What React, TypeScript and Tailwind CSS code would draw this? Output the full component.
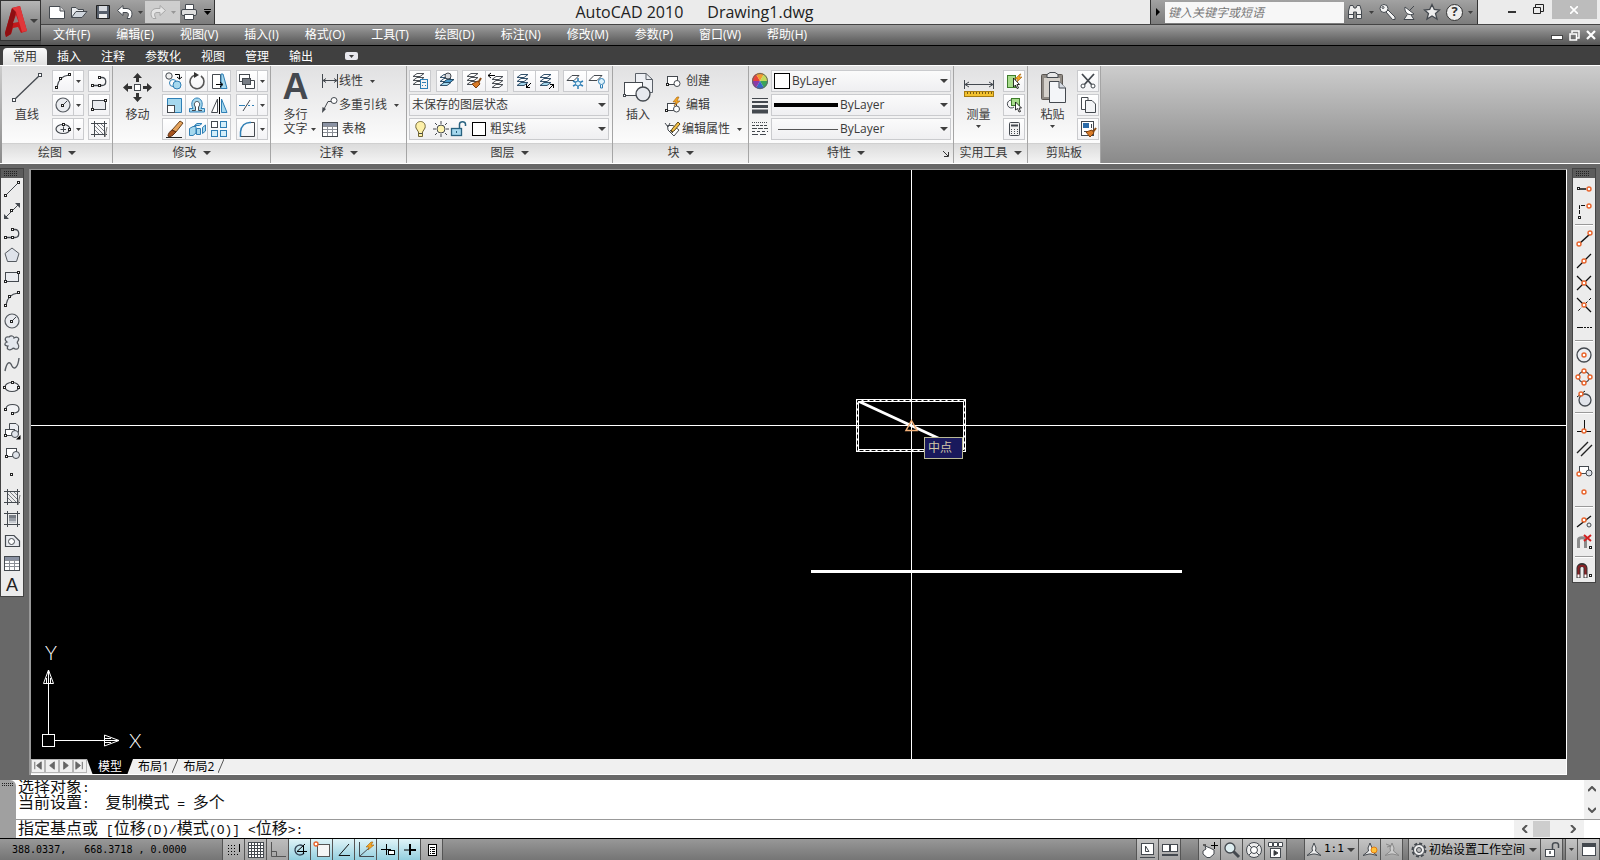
import React, { ReactNode } from "react";
import clsx from "clsx";

const ink = "#44494f";
const blue = "#2f7fb5";
const sky = "#a5d8ee";
const orange = "#e8642c";

const Svg = ({ w = 18, h = 18, children }: { w?: number; h?: number; children: ReactNode }) => (
  <svg width={w} height={h} viewBox={`0 0 ${w} ${h}`} fill="none" stroke={ink} className="shrink-0">
    {children}
  </svg>
);

// square grip used at the end of most line icons
const Node = ({ x, y }: { x: number; y: number }) => (
  <rect x={x - 0.5} y={y - 0.5} width="2" height="2" fill="#fff" stroke="#222" />
);

const Ring = ({ x, y }: { x: number; y: number }) => (
  <circle cx={x} cy={y} r="2" stroke={orange} strokeWidth="1.4" fill="#fff" />
);

const Caret = ({ className }: { className?: string }) => (
  <svg width="8" height="4" viewBox="0 0 8 4" className={clsx("shrink-0", className)}>
    <path d="M0 0H8L4 4Z" fill="#3f3f3f" />
  </svg>
);

const SmallCaret = ({ className }: { className?: string }) => (
  <svg width="5" height="3" viewBox="0 0 5 3" className={clsx("shrink-0", className)}>
    <path d="M0 0H5L2.5 3Z" fill="#3f3f3f" />
  </svg>
);

const sheets = (
  <g fill="#fff" stroke="#4a4f55">
    <path d="M2 12.5L6 9.5H13L9 12.5Z" />
    <path d="M2 8.5L6 5.5H13L9 8.5Z" />
    <path d="M2 4.5L6 1.5H13L9 4.5Z" />
  </g>
);

const blueSheets = (
  <g stroke="#33516b">
    <path d="M2 13.5L6 10.5H13L9 13.5Z" fill={sky} />
    <path d="M2 9.5L6 6.5H13L9 9.5Z" fill="#fff" />
    <path d="M2 5.5L6 2.5H13L9 5.5Z" fill="#fff" />
  </g>
);

const icons = {
  line: (
    <Svg>
      <path d="M3 15L15 3" />
      <Node x={2} y={15} />
      <Node x={15} y={2} />
    </Svg>
  ),
  xline: (
    <Svg>
      <path d="M3 15L15 3" />
      <path d="M1 17V12L6 17ZM17 1V6L12 1Z" fill={ink} stroke="none" />
      <Node x={8} y={8} />
    </Svg>
  ),
  polyline: (
    <Svg>
      <path d="M3 13.5H12C17 13.5 17 5.5 12 5.5H10" strokeWidth="1.3" />
      <Node x={2} y={13} />
      <Node x={9} y={13} />
      <Node x={9} y={5} />
    </Svg>
  ),
  polygon: (
    <Svg>
      <path d="M9 2L16 7.5L13.5 15.5H4.5L2 7.5Z" fill="#dfe3ea" stroke="#555a60" />
    </Svg>
  ),
  rect: (
    <Svg>
      <rect x="2.5" y="4.5" width="13" height="9" fill="#e9ebef" />
      <Node x={2} y={13} />
      <Node x={15} y={4} />
    </Svg>
  ),
  arc: (
    <Svg>
      <path d="M3 15C4 8 8 4 15 3" strokeWidth="1.2" />
      <Node x={2} y={15} />
      <Node x={6} y={6} />
      <Node x={15} y={2} />
    </Svg>
  ),
  circle: (
    <Svg>
      <circle cx="9" cy="9" r="7" fill="#e9ebef" stroke="#555a60" strokeWidth="1.2" />
      <path d="M9 9L13 5" />
      <Node x={8} y={9} />
    </Svg>
  ),
  cloud: (
    <Svg>
      <path
        d="M6 3C8 1 11 2 11 4C14 2 17 4 15 7C14 8 14 9 15 10C17 13 15 16 12 15C11 14 10 14 9 15C6 17 3 15 5 12C1 12 1 9 4 8C1 6 2 2 6 3Z"
        fill="#e4e8ee"
        stroke="#555a60"
        strokeWidth="1.2"
      />
    </Svg>
  ),
  spline: (
    <Svg>
      <path d="M2 15C4 5 7 5 9 10C11 14 15 12 16 2" stroke="#555a60" strokeWidth="1.4" />
    </Svg>
  ),
  ellipse: (
    <Svg>
      <ellipse cx="9" cy="9" rx="7" ry="4.5" fill="#f2f3f5" strokeWidth="1.2" />
      <Node x={9} y={4} />
      <Node x={1} y={9} />
      <Node x={15} y={9} />
    </Svg>
  ),
  ellipseCenter: (
    <Svg>
      <ellipse cx="9" cy="9" rx="7" ry="4.5" fill="#f2f3f5" strokeWidth="1.2" />
      <path d="M9.5 6.5V12M6.5 9.5H12" />
      <Node x={9} y={4} />
      <Node x={15} y={9} />
    </Svg>
  ),
  ellipseArc: (
    <Svg>
      <path d="M3 9C3 3 16 3 16 9C16 12 13 13 10 13" fill="#f2f3f5" strokeWidth="1.2" />
      <Node x={2} y={9} />
      <Node x={9} y={13} />
    </Svg>
  ),
  insertBlock: (
    <Svg>
      <path d="M6.5 1.5H13L15.5 4V10.5H6.5Z" fill="#eceef2" />
      <rect x="2.5" y="7.5" width="9" height="6" fill="#fff" />
      <circle cx="12" cy="12" r="3.5" fill="#e1e5eb" />
      <Node x={2} y={13} />
      <path d="M17.5 13V17.5H13Z" fill="#000" stroke="none" />
    </Svg>
  ),
  makeBlock: (
    <Svg>
      <rect x="3.5" y="4.5" width="10" height="8" fill="#fff" />
      <circle cx="13" cy="11" r="3.5" fill="#e1e5eb" />
      <Node x={3} y={12} />
    </Svg>
  ),
  point: (
    <Svg>
      <Node x={8} y={8} />
    </Svg>
  ),
  hatch: (
    <Svg>
      <path d="M4.5 1V17M14.5 1V17M1 3.5H17M1 14.5H17" />
      <path d="M5 6L13 14M7 4L14 11M11 4L14 7M5 10L9 14" stroke="#7c8086" />
      <path d="M15 17L17 7" stroke="#777" />
    </Svg>
  ),
  gradient: (
    <Svg>
      <path d="M4.5 1V17M14.5 1V17M1 3.5H17M1 14.5H17" />
      <rect x="6" y="5" width="7" height="3" fill="#777c84" stroke="none" />
      <rect x="6" y="8" width="7" height="3" fill="#989da5" stroke="none" />
      <rect x="6" y="11" width="7" height="2" fill="#c5c9cf" stroke="none" />
    </Svg>
  ),
  region: (
    <Svg>
      <path d="M2.5 3.5H11L16.5 9V14.5H2.5Z" fill="#e8eaef" strokeWidth="1.2" />
      <circle cx="8.5" cy="9.5" r="3" fill="#fff" />
    </Svg>
  ),
  table: (
    <Svg>
      <rect x="1.5" y="2.5" width="15" height="14" fill="#fff" />
      <rect x="2" y="3" width="14" height="3" fill="#8a92a3" stroke="none" />
      <path d="M2 6.5H16M2 9.5H16M2 12.5H16M6.5 6V16M11.5 6V16" stroke="#8b8f96" />
    </Svg>
  ),
  copy: (
    <Svg w={20} h={20}>
      <circle cx="5" cy="5" r="3.2" fill="#eee" />
      <circle cx="9" cy="12" r="3.5" stroke={blue} fill="#fff" />
      <circle cx="13" cy="14" r="4" stroke={blue} fill={sky} />
      <path d="M11 3.5H15.5V8M13 6L15.5 8L18 6" stroke="#000" />
    </Svg>
  ),
  rotate: (
    <Svg w={20} h={20}>
      <path d="M8 4A7 7 0 1 0 14 5" strokeWidth="1.6" stroke="#555" />
      <path d="M7 1L12 4L7 7Z" fill="#333" stroke="none" />
    </Svg>
  ),
  stretch: (
    <Svg w={20} h={20}>
      <path d="M3.5 3.5H11.5V17.5H3.5Z" fill="#fff" />
      <path d="M12 3H14L18 17.5H12Z" fill={sky} stroke={blue} />
      <path d="M7 13.5H13M11 11L14 13.5L11 16" stroke="#000" />
    </Svg>
  ),
  scale: (
    <Svg w={20} h={20}>
      <path d="M3.5 3.5H17.5V17.5H3.5Z" fill={sky} stroke={blue} />
      <rect x="3.5" y="10.5" width="7" height="7" fill="#fff" />
    </Svg>
  ),
  offset: (
    <Svg w={20} h={20}>
      <path d="M2.5 17V13.5H6C3 8 6 3 10 3C14 3 17 8 14 13.5H17.5V17Z" fill={sky} stroke={blue} />
      <path d="M5 15.5H8.5V12C6 9 8 6.5 10 6.5C12 6.5 14 9 11.5 12V15.5H15" fill="#fff" />
    </Svg>
  ),
  mirror: (
    <Svg w={20} h={20}>
      <path d="M8.5 4V17.5H2.5Z" fill="#fff" />
      <path d="M12.5 4V17.5H18Z" fill={sky} stroke={blue} />
      <path d="M10.5 2V19" stroke="#000" />
    </Svg>
  ),
  erase: (
    <Svg w={20} h={20}>
      <path d="M2 18.5H18" stroke="#222" />
      <path d="M16 2L19 4L12 13L8 11Z" fill="#e5a35c" stroke="#6b421c" />
      <path d="M8 11L12 13L9 16C7 18 4 18 4 17C4 15 6 12 8 11Z" fill="#a6541f" stroke="#5b2d12" />
    </Svg>
  ),
  explode: (
    <Svg w={20} h={20}>
      <g fill={sky} stroke={blue}>
        <path d="M2.5 9.5L6 7.5H9V14L6 16.5H2.5Z" />
        <path d="M7.5 6.5L10 4.5H15L12.5 6.5Z" />
        <path d="M9.5 9.5H13.5V15.5H9.5Z" />
        <path d="M15.5 8.5L18.5 6V12L15.5 14.5Z" />
      </g>
    </Svg>
  ),
  array: (
    <Svg w={20} h={20}>
      <rect x="2.5" y="2.5" width="6" height="6" fill="#fff" />
      <g fill="#d5effa" stroke={blue}>
        <rect x="11.5" y="2.5" width="6" height="6" />
        <rect x="2.5" y="11.5" width="6" height="6" />
        <rect x="11.5" y="11.5" width="6" height="6" />
      </g>
    </Svg>
  ),
  order: (
    <Svg w={20} h={20}>
      <rect x="2.5" y="3.5" width="10" height="7" fill="#fff" />
      <path d="M14 9.5H17.5V17.5H8.5V14" fill="#fff" />
      <rect x="5.5" y="7.5" width="8" height="6" fill="#777c84" />
    </Svg>
  ),
  trim: (
    <Svg w={20} h={20}>
      <path d="M2 10.5H8M11 10.5H13M15 10.5H17" stroke={blue} />
      <path d="M6 16L13 5" />
    </Svg>
  ),
  fillet: (
    <Svg w={20} h={20}>
      <path d="M3.5 18V13C4 7 8 3 14 3.5" stroke={blue} strokeWidth="1.5" />
      <path d="M14 3.5H17.5V17.5H4" />
    </Svg>
  ),
  linear: (
    <Svg>
      <path d="M1.5 2V16M16.5 2V16M2 8.5H16M5 6.5L2 8.5L5 10.5M13 6.5L16 8.5L13 10.5" />
    </Svg>
  ),
  leader: (
    <Svg>
      <circle cx="13" cy="4.5" r="3" fill="#fff" />
      <path d="M10 5.5H7L3 13" />
      <path d="M1 17L1.5 11L5 13Z" fill={ink} stroke="none" />
    </Svg>
  ),
  insertRow: (
    <Svg>
      <rect x="3.5" y="4.5" width="10" height="8" fill="#fff" />
      <circle cx="13" cy="11.5" r="3" fill="#fff" />
      <Node x={3} y={12} />
    </Svg>
  ),
  editBlock: (
    <Svg>
      <rect x="3.5" y="7.5" width="9" height="7" fill="#fff" />
      <circle cx="12.5" cy="13" r="3" fill="#fff" />
      <Node x={2} y={14} />
      <path d="M13 1L9 6H12L10 10L16 5H13L15 1Z" fill="#f5a623" stroke="#a3620d" strokeWidth=".6" />
    </Svg>
  ),
  editAttr: (
    <Svg>
      <path d="M3.5 5.5H9L15 10L10 16L4 10Z" fill="#fff" />
      <path d="M1 3L4 7L6 3M6 10L9 13" />
      <path d="M14 2L16 4L10 11L7 12L8 9Z" fill="#f4c046" stroke="#5d4a1c" />
    </Svg>
  ),
  layerProps: (
    <Svg>
      {sheets}
      <rect x="9.5" y="7.5" width="7" height="9" fill="#f4f4f4" stroke={blue} />
      <path d="M11 10.5H15M11 13.5H12M14 13.5H15" stroke={blue} />
    </Svg>
  ),
  layerMatch: (
    <Svg>
      {blueSheets}
      <path d="M5 10.5L9 7.5H16L12 10.5Z" fill="#4c9ed0" stroke="#234a66" />
      <circle cx="10" cy="4" r="3" fill="#d5d9df" />
    </Svg>
  ),
  layerBrush: (
    <Svg>
      {sheets}
      <path d="M16 6L13 11" stroke="#8b4c15" strokeWidth="2" />
      <path d="M7 12L13 9L15 12L11 16Z" fill="#d97b28" stroke="#7c3f0e" />
    </Svg>
  ),
  layerPrev: (
    <Svg>
      <g transform="translate(3 3)">{sheets}</g>
      <path d="M8 3.5H1M4 1L1 3.5L4 6" stroke="#000" />
    </Svg>
  ),
  layerIso: (
    <Svg>
      {blueSheets}
      <path d="M16 11L11 16M11.5 12V15.5H15" stroke="#000" />
    </Svg>
  ),
  layerUniso: (
    <Svg>
      {blueSheets}
      <path d="M11 17L16 12M12 12.5H15.5V16" stroke="#000" />
    </Svg>
  ),
  layerFreeze: (
    <Svg>
      <path d="M1 8.5L6 3.5H13L8 8.5Z" fill="#fff" />
      <path d="M12 6V17M7 9L17 14M17 9L7 14" stroke={blue} strokeWidth="1.5" />
      <circle cx="12" cy="11.5" r="2.5" fill="#dff2fb" stroke={blue} />
    </Svg>
  ),
  layerOff: (
    <Svg>
      <path d="M1 8.5L6 3.5H14L9 8.5Z" fill="#fff" />
      <circle cx="13.5" cy="9.5" r="3" fill="#dff2fb" stroke={blue} />
      <path d="M12.5 13V16H14.5V13" stroke={blue} />
    </Svg>
  ),
  quickSelect: (
    <Svg>
      <rect x="2.5" y="3.5" width="8" height="12" fill="#a8dc8c" stroke="#3f7d2c" />
      <path d="M15 2L10 7H13L11 11L17 5H14L16 2Z" fill="#f5a623" stroke="#a3620d" strokeWidth=".6" />
      <path d="M8.5 6V15L10.5 13L12 16.5L13.5 16L12 12.5H14.5Z" fill="#fff" stroke="#000" strokeWidth=".8" />
    </Svg>
  ),
  selectAll: (
    <Svg>
      <path d="M6 4A4 4 0 1 0 9 11" />
      <rect x="6.5" y="2.5" width="8" height="7" fill="#a8dc8c" stroke="#3f7d2c" />
      <path d="M10.5 6V14L12.5 12.5L14 16L15.5 15.5L14 12H16.5Z" fill="#fff" stroke="#000" strokeWidth=".8" />
    </Svg>
  ),
  calc: (
    <Svg>
      <rect x="4.5" y="2.5" width="10" height="13" rx="1" fill="#f1f1f1" />
      <path d="M6 5.5H13" strokeWidth="2" />
      <path d="M6 9.5H13M6 11.5H13M6 13.5H13" strokeDasharray="1 2" />
    </Svg>
  ),
  cut: (
    <Svg>
      <path d="M3 2L13 13M15 2L5 13" strokeWidth="1.8" />
      <circle cx="4" cy="14" r="2" fill="#fff" />
      <circle cx="14" cy="14" r="2" fill="#fff" />
    </Svg>
  ),
  copyClip: (
    <Svg>
      <path d="M2.5 1.5H9V13.5H2.5Z" fill="#fff" />
      <path d="M6.5 4.5H13L16.5 8V16.5H6.5Z" fill="#f4f5f7" />
    </Svg>
  ),
  matchProps: (
    <Svg>
      <rect x="2.5" y="1.5" width="12" height="14" fill="#fff" />
      <rect x="4" y="3" width="6" height="5" fill="#2a6aa8" stroke="none" />
      <path d="M12.5 4V8M5 11.5H8" />
      <path d="M17 8L14 12" stroke="#8b4c15" strokeWidth="2" />
      <path d="M7 12L13 10L15 13L11 17Z" fill="#d97b28" stroke="#7c3f0e" />
    </Svg>
  ),
};

const osnap: Record<string, ReactNode> = {
  临时追踪点: (<Svg><path d="M5 9H11" strokeWidth="1.5" stroke="#111" /><Node x={3} y={8} /><Ring x={14} y={9} /></Svg>),
  捕捉自: (<Svg><path d="M4.500 12V3.500H11" strokeDasharray="4 1" stroke="#111" /><Node x={4} y={15} /><Ring x={14} y={4} /></Svg>),
  端点: (<Svg><path d="M4 14L15 4" strokeWidth="1.5" stroke="#111" /><Ring x={4} y={14} /><Ring x={15} y={3} /></Svg>),
  中点: (<Svg><path d="M2 16L16 2" strokeWidth="1.3" stroke="#111" /><Ring x={9} y={9} /></Svg>),
  交点: (<Svg><path d="M2 2L16 16M16 2L2 16" strokeWidth="1.3" stroke="#111" /><Ring x={9} y={9} /></Svg>),
  外观交点: (<Svg><path d="M2 2L16 16" strokeWidth="1.3" stroke="#111" /><path d="M16 2L2 16" strokeDasharray="3 2" stroke="#111" /><Ring x={9} y={9} /></Svg>),
  延长线: (<Svg><path d="M2 9.500H8M9 9.500H11M12 9.500H14M15 9.500H17" stroke="#111" /></Svg>),
  圆心: (<Svg><circle cx="9" cy="9" r="7" fill="#eceef2" strokeWidth="1.3" /><Ring x={9} y={9} /></Svg>),
  象限点: (<Svg><circle cx="9" cy="9" r="5.5" strokeWidth="1.3" /><Ring x={9} y={3} /><Ring x={9} y={15} /><Ring x={3} y={9} /><Ring x={15} y={9} /></Svg>),
  切点: (<Svg><circle cx="10" cy="10" r="6" fill="#e1e4ea" strokeWidth="1.3" /><path d="M2 7L10 1" stroke="#111" /><Ring x={6} y={4} /></Svg>),
  垂足: (<Svg><path d="M2 13.500H16M9.500 2V12" stroke="#111" /><Ring x={9} y={13} /></Svg>),
  平行线: (<Svg><path d="M2 13L13 2M6 16L17 5" strokeWidth="1.4" stroke="#222" /></Svg>),
  插入点: (<Svg><rect x="4.500" y="4.500" width="9" height="7" fill="#fff" /><circle cx="14" cy="11" r="3" fill="#dfe3ea" /><Ring x={4} y={12} /></Svg>),
  节点: (<Svg><Ring x={9} y={8} /></Svg>),
  最近点: (<Svg><path d="M2 15L16 4" strokeWidth="1.3" stroke="#111" /><Ring x={9} y={8} /><circle cx="14" cy="13" r="2" /></Svg>),
  无捕捉: (<Svg><path d="M3.500 16V6C3.500 3 10.500 3 10.500 6V16" stroke="#8c8c8c" strokeWidth="3" /><path d="M2 15H5M9 15H12" stroke="#eee" strokeWidth="2" /><path d="M9 1L16 7M16 1L9 7" stroke="#d21f1f" strokeWidth="2" /><Node x={15} y={13} /></Svg>),
  对象捕捉设置: (<Svg><path d="M3.500 16V6C3.500 2 10.500 2 10.500 6V16" stroke="#333" strokeWidth="4" /><path d="M3.500 15V6C3.500 3 10.500 3 10.500 6V15" stroke="#8a2226" strokeWidth="2" /><path d="M2.500 14H4.500M9.500 14H11.500" stroke="#fff" strokeWidth="3" /><Node x={15} y={13} /></Svg>),
};

const osnapGroups = [
  ["临时追踪点", "捕捉自"],
  ["端点", "中点", "交点", "外观交点", "延长线"],
  ["圆心", "象限点", "切点"],
  ["垂足", "平行线", "插入点", "节点"],
  ["最近点", "无捕捉"],
  ["对象捕捉设置"],
];

const drawTools: [string, ReactNode][] = [
  ["直线", icons.line],
  ["构造线", icons.xline],
  ["多段线", icons.polyline],
  ["正多边形", icons.polygon],
  ["矩形", icons.rect],
  ["圆弧", icons.arc],
  ["圆", icons.circle],
  ["修订云线", icons.cloud],
  ["样条曲线", icons.spline],
  ["椭圆", icons.ellipse],
  ["椭圆弧", icons.ellipseArc],
  ["插入块", icons.insertBlock],
  ["创建块", icons.makeBlock],
  ["点", icons.point],
  ["图案填充", icons.hatch],
  ["渐变色", icons.gradient],
  ["面域", icons.region],
  ["表格", icons.table],
];

const menus = [
  "文件(F)", "编辑(E)", "视图(V)", "插入(I)", "格式(O)", "工具(T)",
  "绘图(D)", "标注(N)", "修改(M)", "参数(P)", "窗口(W)", "帮助(H)",
];

const tabs = ["常用", "插入", "注释", "参数化", "视图", "管理", "输出"];

const QuickAccess = () => (
  <div className="flex h-6 w-[174px] items-center border-r border-[#333] bg-linear-to-b from-[#a2a2a2] to-[#7c7c7c] pl-[7px]">
    <button aria-label="新建" className="w-[22px]">
      <Svg><path d="M1.500 3.500H12L16.500 8V15.500H1.500Z" fill="#fff" /><path d="M12 3.500V8H16.500" fill="#ddd" /></Svg>
    </button>
    <button aria-label="打开" className="w-6">
      <Svg><path d="M1.500 14.500V4.500H6L8 6.500H13.500V9" fill="#e8ebee" /><path d="M1.500 14.500L6 8.500H17L12 14.500Z" fill="#cfd5dc" /></Svg>
    </button>
    <button aria-label="保存" className="w-[22px]">
      <Svg><path d="M2.500 2.500H15.500V15.500H2.500Z" fill="#58606c" stroke="#222" /><rect x="5" y="3" width="8" height="5" fill="#d8dbe0" stroke="none" /><rect x="5" y="11" width="8" height="4" fill="#eee" stroke="none" /></Svg>
    </button>
    <button aria-label="放弃" className="flex w-[29px] items-center gap-1">
      <Svg><path d="M1.500 7.500L7 2.500V5.500H11C17 6 17 13 14 15.500H11C13 12 13 9.500 10 9.500H7V12.500Z" fill="#fff" /></Svg>
      <SmallCaret />
    </button>
    <button aria-label="重做" className="flex h-[22px] w-[35px] items-center gap-1 bg-[#d4d4d4] pl-1 opacity-90">
      <Svg><path d="M16.500 7.500L11 2.500V5.500H7C1 6 1 13 4 15.500H7C5 12 5 9.500 8 9.500H11V12.500Z" fill="#eee" stroke="#aaa" /></Svg>
      <SmallCaret className="opacity-40" />
    </button>
    <button aria-label="打印" className="w-[22px]">
      <Svg><path d="M5.500 7V1.500H13.500V7" fill="#fff" /><rect x="1.500" y="6.500" width="15" height="6" rx="1.500" fill="#ddd" /><path d="M4.500 11.500H13.500V16.500H4.500Z" fill="#fff" /></Svg>
    </button>
    <button aria-label="自定义快速访问工具栏" className="flex flex-col items-center gap-px pl-[2px]">
      <span className="h-px w-[7px] bg-black" />
      <svg width="7" height="4"><path d="M0 0H7L3.500 4Z" fill="#000" /></svg>
    </button>
  </div>
);

const TitleBar = () => (
  <div className="box-content flex h-6 items-start justify-between border-b border-[#444] bg-[#ebebeb]">
    <QuickAccess />
    <h1 className="ml-auto flex gap-6 pl-6 text-base leading-[25px] text-[#222]">
      <span>AutoCAD 2010</span>
      <span>Drawing1.dwg</span>
    </h1>
    <div className="ml-auto flex h-6 w-[328px] items-center border-x border-[#333] bg-linear-to-b from-[#a2a2a2] to-[#7c7c7c]">
      <svg width="14" height="8"><path d="M5 0L9 4L5 8Z" fill="#000" /></svg>
      <input
        aria-label="搜索"
        placeholder="键入关键字或短语"
        className="mt-px h-[21px] w-[179px] bg-[#f7f7f7] pl-[3px] text-[12px] italic placeholder:text-[#777]"
      />
      <button aria-label="搜索按钮" className="flex items-center gap-[5px] pl-[2px]">
        <Svg><path d="M2.500 15.500V8L4 2.500H7L8 5H10L11 2.500H14L15.500 8V15.500H10.500V9H7.500V15.500Z" fill="#eee" /><path d="M2 11.500H7M11 11.500H16" /></Svg>
        <SmallCaret />
      </button>
      <button aria-label="速博应用中心" className="pl-1">
        <Svg><circle cx="6" cy="5.500" r="4" fill="#f4f4f4" /><path d="M8 9L10 7L17 14V16.500H14.500Z" fill="#f4f4f4" /><circle cx="5" cy="4.500" r="1" /></Svg>
      </button>
      <button aria-label="通讯中心" className="pl-[5px]">
        <Svg><path d="M4 4C3 10 8 13 13 11Z" fill="#fff" /><path d="M8 8L13 3M6 12L3 16.500H13L10 12" fill="#eee" /></Svg>
      </button>
      <button aria-label="收藏夹" className="pl-1">
        <Svg><path d="M9 1.500L11.300 6.500L16.500 7L12.500 10.500L14 16L9 13L4 16L5.500 10.500L1.500 7L6.700 6.500Z" fill="#eee" strokeWidth="1.300" /></Svg>
      </button>
      <button aria-label="帮助" className="flex items-center gap-[5px] pl-[5px]">
        <span className="flex size-[17px] items-center justify-center rounded-full border border-[#333] bg-[#eee] text-[13px] font-bold text-[#333]">?</span>
        <SmallCaret />
      </button>
    </div>
    <div className="flex h-[19px] w-[122px] items-center justify-end">
      <button aria-label="最小化" className="flex h-full w-[26px] items-center justify-center">
        <span className="mt-[5px] h-[2px] w-2 bg-[#333]" />
      </button>
      <button aria-label="还原" className="flex h-full w-[27px] items-center justify-center">
        <svg width="11" height="11" fill="none" stroke="#222"><path d="M.5 3.500H7.500V9.500H.5ZM2.500 3V.5H10.500V7.500H8" /></svg>
      </button>
      <button aria-label="关闭" className="mr-[3px] flex h-full w-[45px] items-center justify-center bg-[#bcbcbc]">
        <svg width="8" height="8" stroke="#fff" strokeWidth="1.600"><path d="M0 0L8 8M8 0L0 8" /></svg>
      </button>
    </div>
  </div>
);

const MenuBar = () => (
  <nav className="flex h-5 items-center justify-between bg-linear-to-b from-[#9f9f9f] to-[#565656] pl-3 text-[12px] text-white">
    <div className="flex gap-[26px]">
      {menus.map((item) => (
        <button key={item} className="whitespace-nowrap">{item}</button>
      ))}
    </div>
    <div className="flex items-center gap-[6px] pr-1">
      <button aria-label="最小化图形" className="mt-1 h-[5px] w-3 border border-[#444] bg-white" />
      <button aria-label="还原图形">
        <svg width="11" height="11" fill="none" stroke="#fff" strokeWidth="1.500"><path d="M1 4H7.500V10H1ZM3 3V1H10V8H8" /></svg>
      </button>
      <button aria-label="关闭图形">
        <svg width="10" height="10" stroke="#fff" strokeWidth="2.200"><path d="M1 1L9 9M9 1L1 9" /></svg>
      </button>
    </div>
  </nav>
);

const TabRow = () => (
  <div className="box-content flex h-[19px] items-end border-t border-black bg-[#404040] pl-[3px] text-[12px]">
    {tabs.map((tab, index) => (
      <button
        key={tab}
        className={clsx("h-[17px] px-[10px] leading-[15px]", index === 0 ? "rounded-t-sm bg-linear-to-b from-[#fafafa] to-[#e2e2e2] text-[#333]" : "text-white")}
      >
        {tab}
      </button>
    ))}
    <button aria-label="最小化功能区" className="mb-[5px] ml-[22px] flex h-2 w-[13px] items-center justify-center rounded-xs bg-[#e8e8ee]">
      <SmallCaret />
    </button>
  </div>
);

const Group = ({ className, items }: { className: string; items: [string, ReactNode][] }) => (
  <div className={clsx("flex h-[22px] divide-x divide-[#cacbce] border border-[#cacbce] bg-linear-to-b from-white to-[#f3f3f5]", className)}>
    {items.map(([label, icon]) => (
      <button key={label} aria-label={label} className="flex min-w-0 flex-1 items-center justify-center">
        {icon}
      </button>
    ))}
  </div>
);

const Split = ({ label, icon }: { label: string; icon: ReactNode }) => (
  <div className="flex h-[22px] w-8 divide-x divide-[#cacbce] border border-[#cacbce] bg-linear-to-b from-white to-[#f3f3f5]">
    <button aria-label={label} className="flex w-[21px] items-center justify-center">{icon}</button>
    <button aria-label={`${label}选项`} className="flex flex-1 items-center justify-center"><SmallCaret /></button>
  </div>
);

const Large = ({ label, icon, className, children }: { label: string; icon: ReactNode; className: string; children?: ReactNode }) => (
  <button className={clsx("flex shrink-0 flex-col items-center pt-[2px]", className)}>
    {icon}
    <span className="mt-[3px] leading-4">{label}</span>
    {children}
  </button>
);

const Row = ({ label, icon, caret }: { label: string; icon: ReactNode; caret?: boolean }) => (
  <button className="flex h-[22px] items-center whitespace-nowrap text-left">
    {icon}
    <span>{label}</span>
    {caret && <SmallCaret className="ml-[7px]" />}
  </button>
);

const Panel = ({ title, width, caret = true, launcher, children }: { title: string; width: string; caret?: boolean; launcher?: boolean; children: ReactNode }) => (
  <section className={clsx("flex shrink-0 flex-col border-r border-[#a5a5a5]", width)}>
    <div className="flex h-[77px] bg-linear-to-b from-[#e1e1e2] to-[#fcfcfc] pt-1">{children}</div>
    <div className="flex h-5 items-start border-t border-[#d0d0d0] bg-linear-to-b from-[#dcdcdc] to-[#f4f4f4]">
      <button className="flex flex-1 items-center justify-center gap-[6px] leading-[17px]">
        {title}
        {caret && <Caret />}
      </button>
      {launcher && (
        <button aria-label="特性对话框" className="pr-1 pt-[7px]">
          <svg width="6" height="6" stroke="#333" fill="none"><path d="M0 0L5 5M5.500 1V5.500H1" /></svg>
        </button>
      )}
    </div>
  </section>
);

const Dropdown = ({ label, value, swatch }: { label: string; value: string; swatch?: ReactNode }) => (
  <label className="flex h-[22px] items-center border border-[#cacbce] bg-linear-to-b from-[#fbfbfb] to-[#efeff1] px-[2px]">
    {swatch}
    <select aria-label={label} className="min-w-0 flex-1 appearance-none bg-transparent outline-none">
      <option>{value}</option>
    </select>
    <Caret />
  </label>
);

const Ribbon = () => (
  <div className="flex h-[99px] border-y border-white bg-linear-to-b from-[#cdcdcd] to-[#8a8a8a] pl-[2px] text-[12px] text-[#3a3a3a]">
    <Panel title="绘图" width="w-[111px]">
      <Large
        label="直线"
        className="w-[50px]"
        icon={
          <Svg w={32} h={32}>
            <path d="M3 28L29 3" strokeWidth="1.300" />
            <rect x="1.500" y="26.500" width="3" height="3" fill="#fff" />
            <rect x="27.500" y="1.500" width="3" height="3" fill="#fff" />
          </Svg>
        }
      />
      <div className="flex flex-col gap-[2px]">
        <Split label="圆弧" icon={icons.arc} />
        <Split label="圆" icon={icons.circle} />
        <Split label="椭圆" icon={icons.ellipseCenter} />
      </div>
      <div className="ml-1 flex flex-col gap-[2px]">
        <Group className="w-[22px]" items={[["多段线", icons.polyline]]} />
        <Group className="w-[22px]" items={[["矩形", icons.rect]]} />
        <Group className="w-[22px]" items={[["图案填充", icons.hatch]]} />
      </div>
    </Panel>
    <Panel title="修改" width="w-[158px]">
      <Large
        label="移动"
        className="w-[49px]"
        icon={
          <Svg w={32} h={32}>
            <rect x="12.500" y="12.500" width="6" height="6" fill="#fff" />
            <g fill="#333" stroke="none">
              <path d="M15.500 1L20 6H17V10H14V6H11Z" />
              <path d="M15.500 30L11 25H14V21H17V25H20Z" />
              <path d="M1 15.500L6 11V14H10V17H6V20Z" />
              <path d="M30 15.500L25 20V17H21V14H25V11Z" />
            </g>
          </Svg>
        }
      />
      <div className="flex flex-col gap-[2px]">
        <Group className="w-[69px]" items={[["复制", icons.copy], ["旋转", icons.rotate], ["拉伸", icons.stretch]]} />
        <Group className="w-[69px]" items={[["缩放", icons.scale], ["偏移", icons.offset], ["镜像", icons.mirror]]} />
        <Group className="w-[69px]" items={[["删除", icons.erase], ["分解", icons.explode], ["阵列", icons.array]]} />
      </div>
      <div className="ml-[5px] flex flex-col gap-[2px]">
        <Split label="绘图次序" icon={icons.order} />
        <Split label="修剪" icon={icons.trim} />
        <Split label="圆角" icon={icons.fillet} />
      </div>
    </Panel>
    <Panel title="注释" width="w-[136px]">
      <button className="flex w-[49px] shrink-0 flex-col items-center leading-[14px]">
        <span className="mb-1 h-[34px] font-['Liberation_Sans',sans-serif] text-[36px] font-bold leading-[34px] text-[#45494f]">A</span>
        <span>多行</span>
        <span className="ml-2 flex items-center gap-[3px]">文字<SmallCaret /></span>
      </button>
      <div className="ml-px flex flex-col gap-[2px]">
        <Row label="线性" icon={icons.linear} caret />
        <Row label="多重引线" icon={icons.leader} caret />
        <Row label="表格" icon={<span className="mr-[3px]">{icons.table}</span>} />
      </div>
    </Panel>
    <Panel title="图层" width="w-[206px]">
      <div className="flex w-full flex-col gap-[2px] pl-[2px] pr-[3px]">
        <div className="flex justify-between">
          <Group className="w-[22px]" items={[["图层特性", icons.layerProps]]} />
          <Group className="w-[22px]" items={[["置为当前", icons.layerMatch]]} />
          <Group className="w-[46px]" items={[["匹配", icons.layerBrush], ["上一个", icons.layerPrev]]} />
          <Group className="w-[46px]" items={[["隔离", icons.layerIso], ["取消隔离", icons.layerUniso]]} />
          <Group className="w-[46px]" items={[["冻结", icons.layerFreeze], ["关闭图层", icons.layerOff]]} />
        </div>
        <Dropdown label="图层状态" value="未保存的图层状态" />
        <Dropdown
          label="图层"
          value="粗实线"
          swatch={
            <span className="mr-1 flex items-center">
              <Svg><path d="M6.500 16.500V12L4 8C3 4 5.500 1.500 8.500 1.500C11.500 1.500 14 4 13 8L10.500 12V16.500Z" fill="#fdf0a8" stroke="#6f6433" /><path d="M7 13.500H10" /></Svg>
              <Svg w={20}><circle cx="11" cy="9" r="4" fill="#fff4ae" /><path d="M11 1V4M11 14V17M3 9H6M16 9H19M5 3L7 5M17 3L15 5M5 15L7 13M17 15L15 13" /></Svg>
              <Svg><rect x="1.500" y="8.500" width="10" height="7" fill={sky} stroke="#27617f" strokeWidth="1.300" /><path d="M9.500 8V4C10 1 15 1 15.500 4V6" stroke="#27617f" strokeWidth="1.500" /><path d="M6.500 11V13" stroke="#27617f" /></Svg>
              <span className="ml-1 size-[14px] border border-black bg-white" />
            </span>
          }
        />
      </div>
    </Panel>
    <Panel title="块" width="w-[136px]">
      <Large
        label="插入"
        className="w-[50px]"
        icon={
          <Svg w={32} h={32}>
            <path d="M13.500 1.500H24L30.500 7.500V20.500H13.500Z" fill="#eef0f4" stroke="#5a6068" />
            <path d="M24 1.500V7.500H30.500" stroke="#5a6068" />
            <rect x="2.500" y="10.500" width="18" height="13" fill="#fff" />
            <circle cx="21" cy="22" r="7" fill="#e6e9ef" strokeWidth="1.300" />
            <rect x="1.500" y="22.500" width="2" height="2" fill="#fff" />
          </Svg>
        }
      />
      <div className="ml-px flex flex-col gap-[2px]">
        <Row label="创建" icon={<span className="mr-1">{icons.insertRow}</span>} />
        <Row label="编辑" icon={<span className="mr-1">{icons.editBlock}</span>} />
        <Row label="编辑属性" icon={icons.editAttr} caret />
      </div>
    </Panel>
    <Panel title="特性" width="w-[205px]" launcher>
      <div className="flex w-full flex-col gap-[2px] px-[2px]">
        <div className="flex items-center gap-[2px]">
          <svg width="18" height="18" viewBox="0 0 18 18">
            <path d="M9 9L1 9A8 8 0 0 1 5 2Z" fill="#e8443a" />
            <path d="M9 9L5 2A8 8 0 0 1 13 2Z" fill="#f29b2e" />
            <path d="M9 9L13 2A8 8 0 0 1 17 9Z" fill="#c5da5a" />
            <path d="M9 9L17 9A8 8 0 0 1 13 16Z" fill="#3aa35a" />
            <path d="M9 9L13 16A8 8 0 0 1 5 16Z" fill="#3468c9" />
            <path d="M9 9L5 16A8 8 0 0 1 1 9Z" fill="#8a3aa8" />
            <circle cx="9" cy="9" r="7.500" fill="none" stroke="#666" />
          </svg>
          <div className="flex-1">
            <Dropdown label="颜色" value="ByLayer" swatch={<span className="mr-[2px] size-4 border border-black bg-white" />} />
          </div>
        </div>
        <div className="flex items-center gap-[2px]">
          <Svg><path d="M1 2.500H17" /><path d="M1 6H17" strokeWidth="2" /><path d="M1 10.500H17" strokeWidth="3" /><path d="M1 15.500H17" strokeWidth="4" /></Svg>
          <div className="flex-1">
            <Dropdown label="线宽" value="ByLayer" swatch={<span className="mr-[2px] h-1 w-16 bg-black" />} />
          </div>
        </div>
        <div className="flex items-center gap-[2px]">
          <Svg><path d="M1 2.500H17" strokeDasharray="1 1" /><path d="M1 5.500H17" strokeDasharray="3 1" /><path d="M1 8.500H17" strokeDasharray="5 1" /><path d="M1 11.500H17" strokeDasharray="3 2" /><path d="M1 14.500H17" strokeDasharray="6 2" /></Svg>
          <div className="flex-1">
            <Dropdown label="线型" value="ByLayer" swatch={<span className="ml-1 mr-[2px] h-px w-[60px] bg-[#555]" />} />
          </div>
        </div>
      </div>
    </Panel>
    <Panel title="实用工具" width="w-[74px]">
      <Large
        label="测量"
        className="w-[49px]"
        icon={
          <Svg w={32} h={32}>
            <path d="M1.500 8V17M30.500 8V17M2 12.500H30M6 10L2 12.500L6 15M26 10L30 12.500L26 15" />
            <rect x="1.500" y="19.500" width="29" height="5" fill="#f2c12f" stroke="#a67c12" />
            <path d="M4.500 20V22M7.500 20V22M10.500 20V22M13.500 20V22M16.500 20V22M19.500 20V22M22.500 20V22M25.500 20V22M28.500 20V22" stroke="#7a5c10" />
          </Svg>
        }
      >
        <SmallCaret className="mt-[2px]" />
      </Large>
      <div className="flex flex-col gap-[2px]">
        <Group className="w-[22px]" items={[["快速选择", icons.quickSelect]]} />
        <Group className="w-[22px]" items={[["全部选择", icons.selectAll]]} />
        <Group className="w-[22px]" items={[["计算器", icons.calc]]} />
      </div>
    </Panel>
    <Panel title="剪贴板" width="w-[73px]" caret={false}>
      <Large
        label="粘贴"
        className="w-[49px]"
        icon={
          <Svg w={32} h={32}>
            <rect x="4.500" y="2.500" width="21" height="25" rx="1" fill="#8f8a84" stroke="#5c5752" />
            <rect x="7" y="6" width="16" height="19" fill="#d5d1cb" stroke="none" />
            <path d="M10 5.500V2.500L13 .5H18L21 2.500V5.500Z" fill="#e8e8e8" />
            <path d="M12.500 9.500H22L28.500 16V30.500H12.500Z" fill="#f3f5f8" />
            <path d="M22 9.500V16H28.500" fill="#d5dae2" />
          </Svg>
        }
      >
        <SmallCaret className="mt-[2px]" />
      </Large>
      <div className="flex flex-col gap-[2px]">
        <Group className="w-[22px]" items={[["剪切", icons.cut]]} />
        <Group className="w-[22px]" items={[["复制剪裁", icons.copyClip]]} />
        <Group className="w-[22px]" items={[["特性匹配", icons.matchProps]]} />
      </div>
    </Panel>
  </div>
);

const Grip = () => (
  <div className="flex h-[9px] items-center bg-[#5c5c5c] pl-[3px]">
    <svg width="14" height="5" stroke="#222" strokeDasharray="1 1"><path d="M0 .5H14M0 2.500H14M0 4.500H14" /></svg>
  </div>
);

const Canvas = () => (
  <div className="relative flex-1 overflow-hidden bg-black">
    <svg className="absolute inset-0 size-full" stroke="#fff" fill="none">
      <path d="M827 231L920 274" strokeWidth="3" />
      <rect x="826.500" y="230.500" width="107" height="50" strokeWidth="3" />
      <rect x="826.500" y="230.500" width="107" height="50" stroke="#000" strokeDasharray="4 2" />
      <path d="M780 401.500H1151" strokeWidth="3" />
      <line x1="880.500" y1="0" x2="880.500" y2="100%" />
      <line x1="0" y1="255.500" x2="100%" y2="255.500" />
      <path d="M880.500 250.500L886 260.500H875Z" stroke="#f5b27a" strokeWidth="1.500" />
    </svg>
    <div className="absolute left-[893px] top-[267px] h-[22px] w-[39px] border border-[#b9b996] bg-[#19195c] pl-[3px] text-[12px] leading-5 text-[#d2c8a8]">
      中点
    </div>
    <svg className="absolute bottom-0 left-0" width="130" height="130" stroke="#fff" fill="none">
      <rect x="11.500" y="105.500" width="12" height="12" />
      <path d="M17.500 105V41M17.500 41L12.500 54.500H22.500ZM15.500 54V49M19.500 54V49" />
      <path d="M24 111.500H88M88 111.500L73.500 106V117ZM74 109.500H80M74 113.500H80" />
      <text x="14" y="31" fontSize="20" fill="#fff" stroke="none" className="font-['Lato',sans-serif] font-light">Y</text>
      <text x="98" y="119" fontSize="20" fill="#fff" stroke="none" className="font-['Lato',sans-serif] font-light">X</text>
    </svg>
  </div>
);

const navArrows = ["M4 3V11M11 3V11L6 7Z", "M10 3V11L5 7Z", "M5 3V11L10 7Z", "M10 3V11M3 3V11L8 7Z"];

const LayoutTabs = () => (
  <div className="flex h-4 border-b border-white bg-[#f0f0f0] text-[12px] leading-[15px] text-black">
    {navArrows.map((d) => (
      <button key={d} aria-label="布局导航" className="h-[14px] w-[14px] border border-[#b5b5b5]">
        <svg width="12" height="12" viewBox="1 1 13 13" fill="#666" stroke="#666"><path d={d} /></svg>
      </button>
    ))}
    <button className="w-[46px] bg-black text-center text-white [clip-path:polygon(0_0,100%_0,88%_100%,12%_100%)]">模型</button>
    <button className="w-[39px] pl-[2px]">布局1</button>
    <svg width="6" height="14" stroke="#555"><path d="M0 14L6 0" /></svg>
    <button className="w-10 pl-[2px]">布局2</button>
    <svg width="6" height="14" stroke="#555"><path d="M0 14L6 0" /></svg>
  </div>
);

// half-width characters are set smaller so that two of them fill one full-width cell
const CommandText = ({ text }: { text: string }) => (
  <>
    {text.split(/([\x20-\x7e]+)/).map((part, index) => (
      <span key={index} className={/^[\x20-\x7e]/.test(part) ? "text-[13px]" : undefined}>{part}</span>
    ))}
  </>
);

const CommandWindow = () => (
  <div className="flex h-[58px] bg-white">
    <div className="w-4 shrink-0 rounded-tr-md bg-[#a0a0a0] pl-[2px] pt-[3px]">
      <svg width="12" height="4" stroke="#222" strokeDasharray="1 1"><path d="M0 .5H12M0 2.500H12" /></svg>
    </div>
    <div className="flex min-w-0 flex-1 flex-col font-['Liberation_Mono','Noto_Sans_CJK_SC',monospace] text-base leading-4 text-[#111]">
      <div className="flex h-[39px] overflow-hidden">
        <div className="flex-1 whitespace-pre pl-[2px]">
          <p className="h-4"><CommandText text="选择对象:" /></p>
          <p className="h-4"><CommandText text="当前设置:  复制模式 = 多个" /></p>
        </div>
        <div className="flex w-4 flex-col items-center justify-between bg-[#f0f0f0] py-[6px]">
          <svg width="8" height="6" fill="none" stroke="#555" strokeWidth="2"><path d="M0 5L4 1L8 5" /></svg>
          <svg width="8" height="6" fill="none" stroke="#555" strokeWidth="2"><path d="M0 1L4 5L8 1" /></svg>
        </div>
      </div>
      <div className="flex h-[19px] border-t border-[#999]">
        <label className="flex-1 whitespace-pre pl-[2px] leading-5">
          <CommandText text="指定基点或 [位移(D)/模式(O)] <位移>:" />
          <input aria-label="命令" className="w-40 leading-4 outline-none" />
        </label>
        <div className="mr-4 flex w-[70px] items-center justify-between bg-[#f0f0f0] px-2">
          <svg width="6" height="8" fill="none" stroke="#555" strokeWidth="2"><path d="M5 0L1 4L5 8" /></svg>
          <div className="mr-4 h-4 w-[17px] bg-[#cdcdcd]" />
          <svg width="6" height="8" fill="none" stroke="#555" strokeWidth="2"><path d="M1 0L5 4L1 8" /></svg>
        </div>
      </div>
    </div>
  </div>
);

const toggles: { label: string; on?: boolean; icon: ReactNode }[] = [
  { label: "捕捉", icon: <Svg><path d="M3 4.500H12M3 7.500H12M3 10.500H12M3 13.500H15" strokeDasharray="1 2" stroke="#000" /><path d="M14.500 3V11" stroke="#000" /></Svg> },
  { label: "栅格", icon: <Svg><rect x="1.500" y="1.500" width="15" height="15" fill="#fff" /><path d="M4.500 1V17M7.500 1V17M10.500 1V17M13.500 1V17M1 4.500H17M1 7.500H17M1 10.500H17M1 13.500H17" /></Svg> },
  { label: "正交", icon: <Svg><path d="M2.500 1V15.500H17M2.500 10.500H7.500V15" stroke="#555" /></Svg> },
  { label: "极轴", on: true, icon: <Svg><path d="M12 5A5 5 0 1 0 13 12" stroke="#345" strokeWidth="1.300" /><path d="M6 10.500H16M6 10.500L14 3M12.500 5V13" stroke="#000" /></Svg> },
  { label: "对象捕捉", on: true, icon: <Svg><rect x="4.500" y="3.500" width="12" height="12" fill="#f5f5f5" stroke="#555" /><Ring x={3} y={3} /></Svg> },
  { label: "对象追踪", on: true, icon: <Svg><path d="M14 3L4 14.500H15" stroke="#111" /></Svg> },
  { label: "动态 UCS", on: true, icon: <Svg><path d="M2.500 1V15.500H17M3 15L12 7" /><path d="M14 1L9 6H12L11 9L17 4H14L16 1Z" fill="#f5a623" stroke="#a3620d" strokeWidth=".6" /></Svg> },
  { label: "动态输入", on: true, icon: <Svg><path d="M2 8.500H12M7.500 3V14" stroke="#000" /><rect x="9.500" y="9.500" width="6" height="4" fill="#fff" stroke="#000" /></Svg> },
  { label: "线宽", on: true, icon: <Svg><path d="M3 9H9" stroke="#000" /><path d="M9 9H15M9 3V14" stroke="#000" strokeWidth="2" /></Svg> },
  { label: "快捷特性", icon: <Svg><rect x="5.500" y="3.500" width="8" height="11" fill="#fff" stroke="#000" /><path d="M7 6.500H12M7 8.500H8M9 8.500H12M7 10.500H8M9 10.500H12M7 12.500H8M9 12.500H12" stroke="#000" /></Svg> },
];

const compass = "M9 2L11 7L10.500 10L16 14.500L10 13H8L2 14.500L7.500 10L7 7Z";

const ToolBox = ({ items }: { items: [string, ReactNode][] }) => (
  <div className="flex border-l border-[#555] bg-linear-to-b from-[#c4c4c4] to-[#a4a4a4]">
    {items.map(([label, icon]) => (
      <button key={label} aria-label={label} className="flex w-[22px] items-center justify-center border-r border-[#555]">{icon}</button>
    ))}
  </div>
);

const StatusBar = () => (
  <footer className="flex h-[22px] justify-between border-t border-black bg-linear-to-b from-[#989898] to-[#757575] text-black">
    <div className="flex">
      <output className="w-[222px] whitespace-pre pl-3 font-['DejaVu_Sans_Mono',monospace] text-[10px] leading-[22px]">388.0337,   668.3718 , 0.0000</output>
      <div className="flex border-l border-[#555]">
        {toggles.map(({ label, on, icon }) => (
          <button
            key={label}
            aria-label={label}
            className={clsx("flex w-[22px] items-center justify-center border-r border-[#555] bg-linear-to-b", on ? "from-[#e0f4f8] to-[#93cfdf]" : "from-[#bdbdbd] to-[#a3a3a3]")}
          >
            {icon}
          </button>
        ))}
      </div>
    </div>
    <div className="flex">
      <ToolBox
        items={[
          ["模型空间", <Svg><rect x="2.500" y="2.500" width="12" height="11" fill="#fff" /><path d="M6.500 5V10.500H10Z" /><path d="M1 16.500H16" /></Svg>],
          ["快速查看布局", <Svg><rect x="1.500" y="3.500" width="7" height="7" fill="#fff" /><rect x="9.500" y="3.500" width="7" height="7" fill="#fff" /><path d="M1 14H17" strokeWidth="2" /></Svg>],
        ]}
      />
      <div className="ml-[17px] flex">
        <ToolBox
          items={[
            ["平移", <Svg><path d="M2 10L5 8L4 5L9 7L13 9V13L9 16.500H6L2 13Z" fill="#fff" /><path d="M13.500 1V8M10 4.500H17M2 4H5" stroke="#000" /></Svg>],
            ["缩放", <Svg><path d="M10 10L16 16" strokeWidth="3" /><circle cx="7" cy="7" r="5" fill="#dfeff2" strokeWidth="1.300" /></Svg>],
            ["控制盘", <Svg><circle cx="9" cy="9" r="7.500" fill="#eee" /><circle cx="9" cy="9" r="3.500" fill="#fff" /><path d="M4 4L7 7M14 4L11 7M4 14L7 11M14 14L11 11" /></Svg>],
            ["运动", <Svg><path d="M1.500 1.500H5.500V5.500H1.500ZM6.500 1.500H10.500V5.500H6.500ZM11.500 1.500H15.500V5.500H11.500Z" fill="#fff" /><rect x="3.500" y="7.500" width="10" height="9" fill="#fff" /><path d="M7 9.500L11 12L7 14.500Z" fill="#333" /></Svg>],
          ]}
        />
      </div>
      <div className="ml-[17px] flex border-l border-[#555] bg-linear-to-b from-[#c4c4c4] to-[#a4a4a4]">
        <button className="flex w-[53px] items-center gap-px font-['DejaVu_Sans_Mono',monospace] text-[11px]">
          <Svg><path d={compass} fill="#eee" /></Svg>
          1:1
          <Caret className="ml-[2px]" />
        </button>
        <ToolBox
          items={[
            ["注释可见性", <Svg><path d={compass} fill="#eee" /><circle cx="13" cy="9" r="3" fill="#ffc23a" stroke="#e07b12" /></Svg>],
            ["自动添加比例", <Svg><path d={compass} fill="#ccc" stroke="#888" /><path d="M3 3L8 5L4 6" stroke="#888" /></Svg>],
          ]}
        />
      </div>
      <div className="ml-[5px] flex border-l border-[#555] bg-linear-to-b from-[#c4c4c4] to-[#a4a4a4]">
        <button className="flex w-[131px] items-center gap-px whitespace-nowrap pl-px text-[12px]">
          <Svg><circle cx="9" cy="9" r="6.500" strokeDasharray="3 2" strokeWidth="2" /><circle cx="9" cy="9" r="5.500" fill="#eee" /><circle cx="9" cy="9" r="2.500" fill="#bbb" /></Svg>
          初始设置工作空间
          <Caret className="ml-[3px]" />
        </button>
        <ToolBox
          items={[
            ["锁定", <Svg><rect x="2.500" y="8.500" width="9" height="7" fill="#fff" /><path d="M9.500 8V3.500C10 1 15 1 15.500 3.500V7M7 10V13" strokeWidth="1.500" /></Svg>],
          ]}
        />
      </div>
      <div className="ml-[2px] flex border-l border-[#555] bg-linear-to-b from-[#c4c4c4] to-[#a4a4a4]">
        <button aria-label="状态栏菜单" className="flex w-[11px] items-center justify-center"><SmallCaret /></button>
        <ToolBox
          items={[
            ["全屏显示", <Svg><rect x="2.500" y="2.500" width="13" height="12" fill="#fff" /><path d="M3 4.500H15" strokeWidth="3" /></Svg>],
          ]}
        />
      </div>
    </div>
  </footer>
);

const App = () => {
  return (
    <div className="flex h-screen flex-col overflow-hidden bg-[#686868] font-['Open_Sans','Noto_Sans_CJK_SC',sans-serif]">
      <header className="flex bg-[#4a4a4a]">
        <button aria-label="应用程序菜单" className="flex h-[41px] w-[41px] shrink-0 items-center gap-px border border-[#333] bg-linear-to-b from-[#b5b5b5] to-[#6f6f6f]">
          <svg width="28" height="36" viewBox="0 0 28 36" className="shrink-0">
            <path d="M4 30L11 5L19 3L26 28L20 30L17 24L12 25L10 31L5 34Z" fill="#c3181b" />
            <path d="M4 30L11 5L15 8L10 31L5 34Z" fill="#8f0f12" />
            <path d="M11 5L19 3L26 28L21 29L15 9Z" fill="#e0373a" />
            <path d="M12 20L15 12L17.500 19Z" fill="#8d7f7f" />
          </svg>
          <Caret />
        </button>
        <div className="min-w-0 flex-1">
          <TitleBar />
          <MenuBar />
        </div>
      </header>
      <TabRow />
      <Ribbon />
      <main className="flex min-h-0 flex-1 items-start justify-between pt-1">
        <aside className="flex w-6 shrink-0 flex-col border border-[#444] bg-[#ececec]">
          <Grip />
          {drawTools.map(([label, icon]) => (
            <button key={label} aria-label={label} className="flex h-[22px] items-center justify-center">{icon}</button>
          ))}
          <button className="h-[22px] font-['Liberation_Sans',sans-serif] text-[18px] leading-[22px] text-[#222]">A</button>
        </aside>
        <div className="mb-[5px] ml-[5px] mt-px flex min-w-0 flex-1 flex-col self-stretch border-l-2 border-r border-t border-l-[#999] border-r-white border-t-[#999]">
          <Canvas />
          <LayoutTabs />
        </div>
        <aside className="ml-[5px] mr-1 flex w-6 shrink-0 flex-col border border-[#444] bg-[#ececec]">
          <Grip />
          {osnapGroups.map((group, index) => (
            <div key={index}>
              {index > 0 && <div className="mx-[2px] my-[2px] h-[2px] border-t border-[#999] bg-white" />}
              {group.map((name) => (
                <button key={name} aria-label={name} className="flex h-[22px] w-full items-center justify-center">{osnap[name]}</button>
              ))}
            </div>
          ))}
        </aside>
      </main>
      <CommandWindow />
      <StatusBar />
    </div>
  );
};

export default App;
